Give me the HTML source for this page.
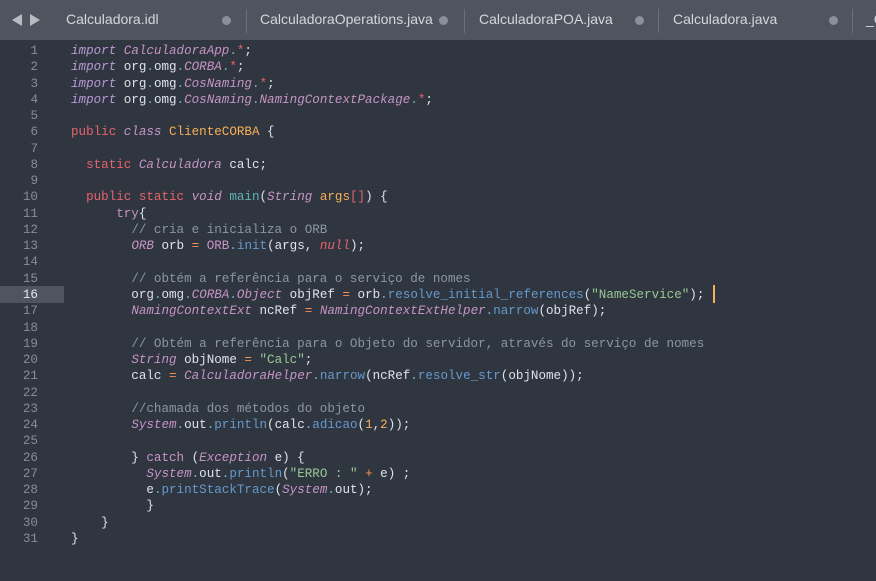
<!DOCTYPE html>
<html><head><meta charset="utf-8"><style>
*{margin:0;padding:0;box-sizing:border-box}
body{width:876px;height:581px;background:#303640;overflow:hidden;position:relative;font-family:"Liberation Mono",monospace}
#tabs{position:absolute;left:0;top:0;width:876px;height:40px;background:#4f555e;font-family:"Liberation Sans",sans-serif;font-size:14px;color:#d4d8de}
.t{position:absolute;top:11px;white-space:nowrap}
.d{position:absolute;top:16px;width:9px;height:9px;border-radius:50%;background:#8a9099}
.s{position:absolute;top:9px;width:1px;height:24px;background:#6a7079}
.ln{position:absolute;left:0;width:38px;text-align:right;font-size:12.6px;color:#868d98;height:16.27px;line-height:16.27px}
.c{position:absolute;left:71px;font-size:12.57px;color:#dde3ec;white-space:pre;height:16.27px;line-height:16.27px}
.k{color:#e7626b}.i{font-style:italic}.p{color:#b69ad6;font-style:italic}.cl{color:#c594c5;font-style:italic}
.o{color:#f99157}.y{color:#f9ae57}.f{color:#5fb3b3}.m{color:#6699cc}.g{color:#99c794}.cm{color:#8d95a3}.dt{color:#6fb3c8}
#hl{position:absolute;left:0;top:286px;width:64px;height:17px;background:#4f5560}
#cur{position:absolute;left:713px;top:285px;width:2px;height:18px;background:#f9ae57}
</style></head><body>
<div id="tabs">
<svg style="position:absolute;left:12px;top:13px" width="28" height="14"><polygon points="0,7 10,1 10,13" fill="#b8bcc2"/><polygon points="18,1 28,7 18,13" fill="#b8bcc2"/></svg>
<div class="t" style="left:66px">Calculadora.idl</div><div class="d" style="left:222px"></div><div class="s" style="left:246px"></div>
<div class="t" style="left:260px">CalculadoraOperations.java</div><div class="d" style="left:439px"></div><div class="s" style="left:464px"></div>
<div class="t" style="left:479px">CalculadoraPOA.java</div><div class="d" style="left:635px"></div><div class="s" style="left:658px"></div>
<div class="t" style="left:673px">Calculadora.java</div><div class="d" style="left:829px"></div><div class="s" style="left:852px"></div>
<div class="t" style="left:866px">_C</div>
</div>
<div id="hl"></div><div id="cur"></div>
<div id="code"></div>
<script>
var L=[
'<span class="p">import</span> <span class="cl">CalculadoraApp</span><span class="dt">.</span><span class="k">*</span>;',
'<span class="p">import</span> org<span class="dt">.</span>omg<span class="dt">.</span><span class="cl">CORBA</span><span class="dt">.</span><span class="k">*</span>;',
'<span class="p">import</span> org<span class="dt">.</span>omg<span class="dt">.</span><span class="cl">CosNaming</span><span class="dt">.</span><span class="k">*</span>;',
'<span class="p">import</span> org<span class="dt">.</span>omg<span class="dt">.</span><span class="cl">CosNaming</span><span class="dt">.</span><span class="cl">NamingContextPackage</span><span class="dt">.</span><span class="k">*</span>;',
'',
'<span class="k">public</span> <span class="cl">class</span> <span class="y">ClienteCORBA</span> {',
'',
'  <span class="k">static</span> <span class="cl">Calculadora</span> calc;',
'',
'  <span class="k">public</span> <span class="k">static</span> <span class="cl">void</span> <span class="f">main</span>(<span class="cl">String</span> <span class="y">args</span><span class="k">[]</span>) {',
'      <span class="cl" style="font-style:normal">try</span>{',
'        <span class="cm">// cria e inicializa o ORB</span>',
'        <span class="cl">ORB</span> orb <span class="o">=</span> <span class="cl" style="font-style:normal">ORB</span><span class="dt">.</span><span class="m">init</span>(args, <span class="k i">null</span>);',
'',
'        <span class="cm">// obtém a referência para o serviço de nomes</span>',
'        org<span class="dt">.</span>omg<span class="dt">.</span><span class="cl">CORBA</span><span class="dt">.</span><span class="cl">Object</span> objRef <span class="o">=</span> orb<span class="dt">.</span><span class="m">resolve_initial_references</span>(<span class="g">"NameService"</span>);',
'        <span class="cl">NamingContextExt</span> ncRef <span class="o">=</span> <span class="cl">NamingContextExtHelper</span><span class="dt">.</span><span class="m">narrow</span>(objRef);',
'',
'        <span class="cm">// Obtém a referência para o Objeto do servidor, através do serviço de nomes</span>',
'        <span class="cl">String</span> objNome <span class="o">=</span> <span class="g">"Calc"</span>;',
'        calc <span class="o">=</span> <span class="cl">CalculadoraHelper</span><span class="dt">.</span><span class="m">narrow</span>(ncRef<span class="dt">.</span><span class="m">resolve_str</span>(objNome));',
'',
'        <span class="cm">//chamada dos métodos do objeto</span>',
'        <span class="cl">System</span><span class="dt">.</span>out<span class="dt">.</span><span class="m">println</span>(calc<span class="dt">.</span><span class="m">adicao</span>(<span class="y">1</span>,<span class="y">2</span>));',
'',
'        } <span class="cl" style="font-style:normal">catch</span> (<span class="cl">Exception</span> e) {',
'          <span class="cl">System</span><span class="dt">.</span>out<span class="dt">.</span><span class="m">println</span>(<span class="g">"ERRO : "</span> <span class="o">+</span> e) ;',
'          e<span class="dt">.</span><span class="m">printStackTrace</span>(<span class="cl">System</span><span class="dt">.</span>out);',
'          }',
'    }',
'}'];
var h='';
for(var i=0;i<L.length;i++){var t=(43+i*16.267).toFixed(2);
h+='<div class="ln" style="top:'+t+'px'+(i==15?';color:#e6e9ee':'')+'">'+(i+1)+'</div><div class="c" style="top:'+t+'px">'+L[i]+'</div>';}
document.getElementById('code').innerHTML=h;
</script>
</body></html>
